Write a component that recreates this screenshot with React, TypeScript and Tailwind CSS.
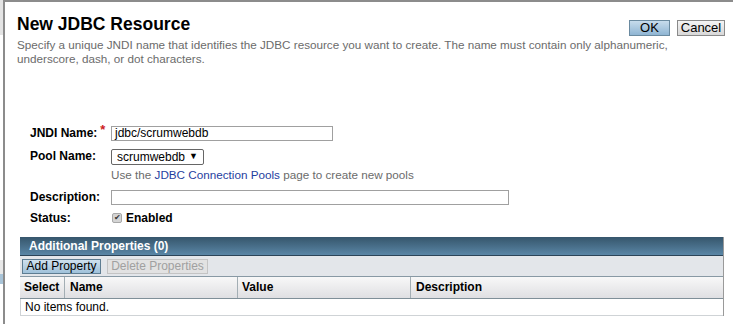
import React from 'react';

const font = { fontFamily: '"Liberation Sans", Arial, sans-serif' };

const App: React.FC = () => {
  return (
    <div className="flex w-[733px] h-[324px] bg-white overflow-hidden text-[12px] text-black" style={font}>
      {/* left frame strip */}
      <div className="flex flex-col w-[3px] shrink-0">
        <div className="h-[35px] bg-[#e4e4e4]" />
        <div className="h-[225px]" />
        <div className="h-[14px] bg-[#e8e8e8]" />
        <div className="h-[10px] bg-[#a9c4d8]" />
      </div>
      <div className="flex-1 border-l-2 border-t-2 border-[#8c8c8c] pl-[12px] pr-[8px]">
        <div className="flex justify-between items-start">
          <h1 className="text-[17.5px] font-bold leading-[20px] mt-[12px]">New JDBC Resource</h1>
          <div className="flex gap-[7px] mt-[18px]">
            <button className="h-[16px] w-[41px] text-[13px] leading-[14px] border border-[#6a8aa0] bg-gradient-to-b from-[#c7dcec] to-[#8fb5d3]">OK</button>
            <button className="h-[16px] w-[48px] text-[13px] leading-[14px] border border-[#8a8a8a] bg-gradient-to-b from-[#f4f4f4] to-[#d8d8d8]">Cancel</button>
          </div>
        </div>
        <p className="mt-[2px] text-[11.7px] leading-[14px] text-[#6b6b6b] pr-[10px]">
          Specify a unique JNDI name that identifies the JDBC resource you want to create. The name must contain only alphanumeric, underscore, dash, or dot characters.
        </p>

        <div className="mt-[59px] pl-[13px] flex flex-col">
          <div className="flex items-center h-[16px]">
            <span className="w-[81px] font-bold flex items-start">JNDI Name:<span className="text-[#cc2222] ml-[3px] -mt-[4px] text-[13px]">*</span></span>
            <div className="w-[222px] h-[15px] border border-[#a0a0a0] px-[3px] text-[12px] leading-[13px]">jdbc/scrumwebdb</div>
          </div>
          <div className="flex items-start mt-[8px]">
            <span className="w-[81px] font-bold leading-[14px]">Pool Name:</span>
            <div className="flex flex-col">
              <div className="w-[93px] h-[16px] border border-[#666] rounded-[2px] flex items-center justify-between px-[5px] text-[12px]">
                <span>scrumwebdb</span>
                <span className="text-[9px]">▼</span>
              </div>
              <span className="mt-[3px] text-[11.7px] text-[#6b6b6b] leading-[14px]">
                Use the <span className="text-[#1f3ea0]">JDBC Connection Pools</span> page to create new pools
              </span>
            </div>
          </div>
          <div className="flex items-center h-[16px] mt-[7px]">
            <span className="w-[81px] font-bold">Description:</span>
            <div className="w-[398px] h-[15px] border border-[#a0a0a0]" />
          </div>
          <div className="flex items-center h-[16px] mt-[5px]">
            <span className="w-[82px] font-bold">Status:</span>
            <span className="w-[10px] h-[10px] rounded-[2px] bg-[#d4d4d4] border border-[#a8a8a8] flex items-center justify-center text-[8px] leading-none text-[#333]">✔</span>
            <span className="ml-[4px] font-bold">Enabled</span>
          </div>
        </div>

        <div className="mt-[11px] ml-[3px] w-[704px] border-r border-[#9a9a9a]">
          <div className="h-[19px] bg-gradient-to-b from-[#36566c] to-[#5a86a6] border-b border-[#2c4458] text-white font-bold pl-[9px] leading-[19px]">
            Additional Properties (0)
          </div>
          <div className="h-[21px] bg-[#e3e6ea] flex items-center gap-[6px] pl-[2px] border-b border-[#8899a4]">
            <button className="h-[15px] w-[79px] text-[12px] leading-[13px] border border-[#5e7d92] bg-gradient-to-b from-[#cfe1ee] to-[#9fc1da]">Add Property</button>
            <button className="h-[15px] w-[101px] text-[12px] leading-[13px] border border-[#c4c4c4] bg-[#e2e2e2] text-[#a0a0a0]">Delete Properties</button>
          </div>
          <div className="flex h-[22px] bg-gradient-to-b from-[#f8f8f8] to-[#dfdfe2] border-b border-[#7f8f98] font-bold leading-[21px]">
            <div className="w-[45px] pl-[4px] border-r border-[#a3aeb4]">Select</div>
            <div className="w-[173px] pl-[5px] border-r border-[#a3aeb4]">Name</div>
            <div className="w-[173px] pl-[4px] border-r border-[#a3aeb4]">Value</div>
            <div className="flex-1 pl-[5px]">Description</div>
          </div>
          <div className="h-[17px] pl-[4px] leading-[16px] border-b border-l border-[#cfd3d6]">No items found.</div>
        </div>
      </div>
    </div>
  );
};

export default App;
